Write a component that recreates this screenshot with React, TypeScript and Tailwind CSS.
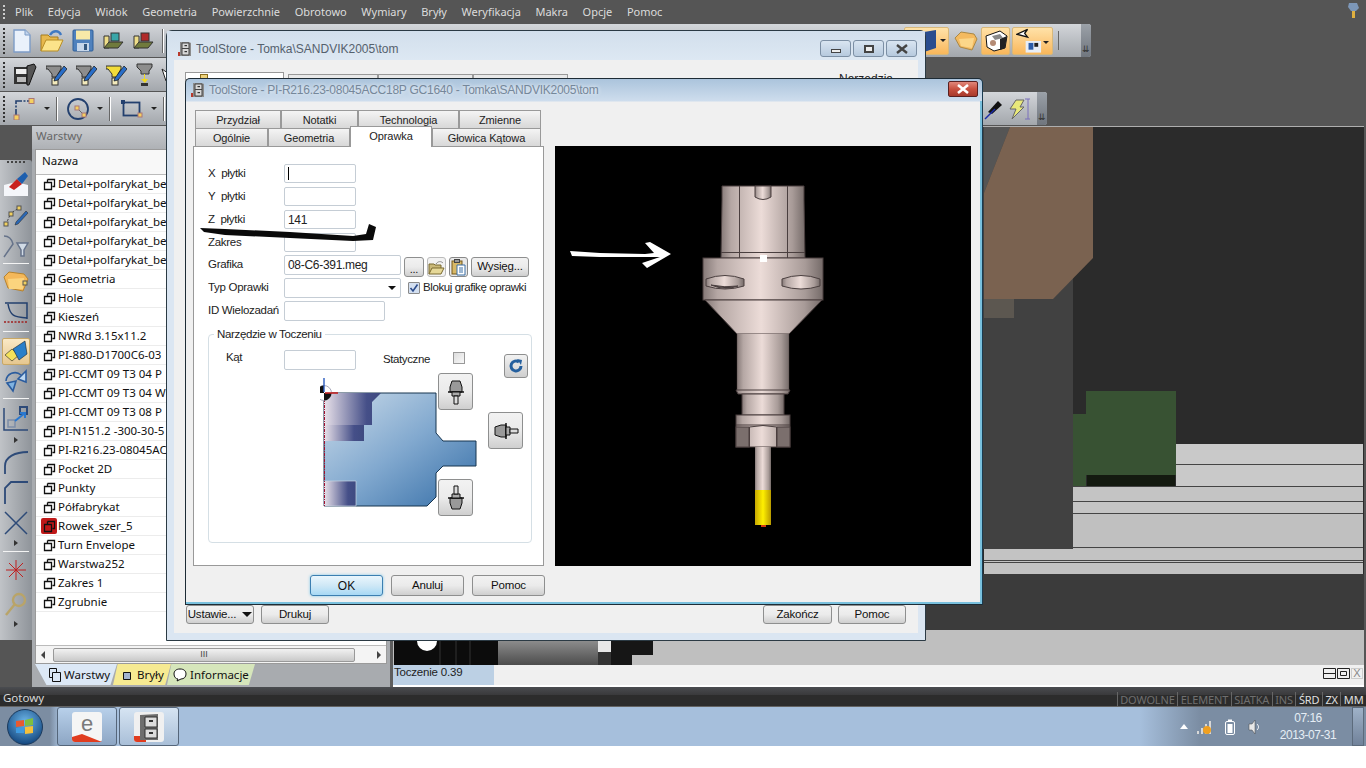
import React from "react";

const ui = "font-['Liberation_Sans',sans-serif]";
const menu = ["Plik","Edycja","Widok","Geometria","Powierzchnie","Obrotowo","Wymiary","Bryły","Weryfikacja","Makra","Opcje","Pomoc"];
const rows = ["Detal+polfarykat_bez","Detal+polfarykat_bez","Detal+polfarykat_bez","Detal+polfarykat_bez","Detal+polfarykat_bez","Geometria","Hole","Kieszeń","NWRd 3.15x11.2","PI-880-D1700C6-03","PI-CCMT 09 T3 04 P","PI-CCMT 09 T3 04 W","PI-CCMT 09 T3 08 P","PI-N151.2 -300-30-5","PI-R216.23-08045AC","Pocket 2D","Punkty","Półfabrykat","Rowek_szer_5","Turn Envelope","Warstwa252","Zakres 1","Zgrubnie"];

function Grip() {
  return <div className="flex flex-col gap-[2px] ml-[3px] mr-[6px] shrink-0">{[0,1,2,3,4,5,6].map(i=><span key={i} className="block w-[2px] h-[2px] bg-[#333]"/>)}</div>;
}
function Sep() { return <span className="block w-px h-[24px] bg-[#666] border-r border-white box-content shrink-0"/>; }
function Drop() { return <span className="block w-0 h-0 border-x-[3px] border-t-[3px] border-x-transparent border-t-[#222] shrink-0"/>; }
function Cabinet({s=16}:{s?:number}) {
  return <svg width={s} height={s} viewBox="0 0 16 16" className="shrink-0"><rect x="1" y="11" width="8" height="4" fill="#b8392c"/><path d="M3 1h9l2 1v13H3z" fill="#8c8c8c"/><path d="M5 2h7v12H5z" fill="#d8d8d8"/><path d="M5 7.5h7M5 2h7v12H5z" stroke="#444" fill="none"/><rect x="7.5" y="4" width="2.5" height="1.2" fill="#333"/><rect x="7.5" y="10" width="2.5" height="1.2" fill="#333"/></svg>;
}
function Layer() {
  return <svg width="13" height="13" viewBox="0 0 13 13" className="shrink-0"><path d="M4.5 1.5h7v7h-2M1.5 4.5h7v7h-7z" fill="none" stroke="#111" strokeWidth="1.3"/><path d="M4.5 1.5v3" stroke="#111" strokeWidth="1.3"/></svg>;
}
function Btn({children,className=""}:{children?:React.ReactNode;className?:string}) {
  return <div className={`flex items-center justify-center rounded-[3px] border border-[#8e8f8f] bg-linear-to-b from-[#f2f2f2] via-[#ebebeb] to-[#cfcfcf] text-[11.5px] text-[#111] shrink-0 ${className}`}>{children}</div>;
}
function Field({children,className=""}:{children?:React.ReactNode;className?:string}) {
  return <div className={`flex items-center px-[3px] rounded-[2px] border border-[#c5cdd5] bg-white text-[12px] text-[#222] shrink-0 ${className}`}>{children}</div>;
}
function Row({label,children}:{label:string;children:React.ReactNode}) {
  return <div className="flex items-center text-[11.5px] tracking-[-0.3px] text-[#222]"><span className="w-[76px] shrink-0 whitespace-pre">{label}</span>{children}</div>;
}
function Tab({w,children}:{w:string;children:React.ReactNode}) {
  return <div className={`flex items-center justify-center h-[18px] pt-[1px] border border-b-0 border-[#999] bg-linear-to-b from-[#f4f4f4] to-[#d8d8d8] text-[11px] tracking-[-0.1px] text-[#222] shrink-0 ${w}`}>{children}</div>;
}

function TopRowIcons() {
  return <>
    <svg width="20" height="24" viewBox="0 0 20 24" className="ml-[1px] shrink-0"><path d="M2 1h11l5 5v17H2z" fill="#eaf1fb" stroke="#7d9cc7" strokeWidth="1.4"/><path d="M13 1v5h5" fill="#c3d4ec" stroke="#7d9cc7"/></svg>
    <svg width="26" height="24" viewBox="0 0 26 24" className="ml-[7px] shrink-0"><path d="M2 22V6h7l2 2h8v4" fill="#e7b84d" stroke="#a57d1e"/><path d="M2 22l5-11h17l-5 11z" fill="#fbe38a" stroke="#b88d25"/><path d="M11 6c3-5 9-5 11 0" fill="none" stroke="#3f79c2" strokeWidth="2.4"/></svg>
    <svg width="22" height="23" viewBox="0 0 22 23" className="ml-[7px] shrink-0"><rect x="1" y="1" width="20" height="21" rx="1" fill="#4f81bd" stroke="#2f5f99"/><rect x="4" y="1.5" width="14" height="9" fill="#f7e9a8"/><rect x="5" y="14" width="12" height="8" fill="#c6d6ea"/><rect x="12" y="15" width="3" height="6" fill="#34587f"/></svg>
    <svg width="21" height="18" viewBox="0 0 21 18" className="ml-[9px] shrink-0"><path d="M1 4h5v12H1z" fill="#eedd88" stroke="#333"/><path d="M1 16l5-6h14l-5 6z" fill="#707a3c" stroke="#333"/><rect x="8" y="1" width="8" height="8" fill="#39a6a8" stroke="#333"/></svg>
    <svg width="21" height="18" viewBox="0 0 21 18" className="ml-[9px] shrink-0"><path d="M1 4h5v12H1z" fill="#eedd88" stroke="#333"/><path d="M1 16l5-6h14l-5 6z" fill="#707a3c" stroke="#333"/><rect x="8" y="1" width="8" height="8" fill="#b02a2a" stroke="#333"/></svg>
    <span className="ml-[8px]"><Sep/></span>
  </>;
}
function Holder({c="#8d8d8d",ml="ml-[9px]"}:{c?:string;ml?:string}) {
  return <svg width="21" height="22" viewBox="0 0 21 22" className={`${ml} shrink-0`}><path d="M0 2h15v3l-3 5v3H6v-3L2 5H0z" fill={c} stroke="#333"/><rect x="6" y="14" width="6" height="7" fill="#f3eabc" stroke="#333"/><path d="M9 14L18 2l3 3-9 11-4 1z" fill="#2a6ec8" stroke="#111" strokeWidth=".7"/></svg>;
}

function ToolRail() {
  const S=({w=26}:{w?:number})=><span className="block h-px bg-[#f4f4f4] mx-auto" style={{width:w}}/>;
  const Tri=()=><span className="block w-0 h-0 mx-auto border-y-[3px] border-l-[4px] border-y-transparent border-l-[#333]"/>;
  const I=({d,h=28,extra}:{d:React.ReactNode;h?:number;extra?:string})=><div className={`flex justify-center items-center shrink-0 ${extra||""}`} style={{height:h}}>{d}</div>;
  return <div className="w-[32px] h-[480px] mt-[34px] shrink-0 flex flex-col rounded-tr-[3px] bg-linear-to-r from-[#c0c3c7] to-[#8f949a] pt-[1px]">
    <div className="flex justify-center gap-[2px] h-[6px] mb-[3px]">{[0,1,2,3,4].map(i=><span key={i} className="block w-[2px] h-[2px] bg-[#444]"/>)}</div>
    <I d={<svg width="26" height="26" viewBox="0 0 26 26"><path d="M1 14l12-3 12 3v11H1z" fill="#f4f6fa"/><path d="M6 16l8-8 5 5-8 6z" fill="#c9211e"/><path d="M14 8l8-7 3 4-6 8z" fill="#1d5fae"/></svg>}/>
    <I extra="mt-[3px]" d={<svg width="26" height="25" viewBox="0 0 26 25"><path d="M3 21L8 10l8-5" stroke="#444" fill="none" strokeDasharray="2 1.5"/><rect x="1" y="19" width="4" height="4" fill="#f0d060" stroke="#555"/><rect x="6" y="9" width="4" height="4" fill="#f0d060" stroke="#555"/><rect x="14" y="3" width="4" height="4" fill="#f0d060" stroke="#555"/><path d="M13 19l10-11 2 2-10 11-3 1z" fill="#2a67b4" stroke="#222" strokeWidth=".5"/></svg>}/>
    <I extra="mt-[3px]" d={<svg width="26" height="26" viewBox="0 0 26 26" fill="none" stroke="#66738a" strokeWidth="1.5"><path d="M1 3c5 0 8 4 9 8L1 24"/><path d="M14 10h11l-4 7v6h-3v-6z" fill="#d1dbe6"/></svg>}/>
    <div className="mt-[3px]"><S/></div>
    <I extra="mt-[4px]" d={<svg width="26" height="22" viewBox="0 0 26 22"><path d="M1 6l5-5 15 2 4 5-5 12L5 17z" fill="#f4b85a" stroke="#b7832d"/><path d="M5 8l16-1-1 11H6z" fill="#fbd47e"/><rect x="20" y="10" width="4" height="4" fill="#f0d060" stroke="#555"/></svg>}/>
    <I extra="mt-[3px]" d={<svg width="26" height="24" viewBox="0 0 26 24" fill="none"><path d="M2 2h22v16M5 3c2 12 6 13 19 14" stroke="#23406e" strokeWidth="1.5"/><path d="M1 21h24" stroke="#a02020" strokeWidth="1.5" strokeDasharray="2 1.5"/></svg>}/>
    <div className="mt-[4px]"><S/></div>
    <div className="mt-[6px] mx-auto w-[28px] h-[27px] border border-[#c9a866] rounded-[2px] bg-linear-to-b from-[#fae9c6] to-[#e6c78f] flex items-center justify-center"><svg width="26" height="24" viewBox="0 0 26 24"><path d="M2 15l7-6 7 6-7 6z" fill="#f4e25a" stroke="#222" strokeWidth=".6"/><path d="M10 9l12-8 2 13-8 6z" fill="#2a7fc9" stroke="#123" strokeWidth=".6"/></svg></div>
    <I extra="mt-[2px]" d={<svg width="26" height="26" viewBox="0 0 26 26" fill="none" stroke="#2b5c9e" strokeWidth="1.6"><path d="M3 13a9 9 0 0 1 15-6" /><path d="M4 15l6 8 3-10z" fill="#7fb2e0"/><path d="M23 3l-8 8 8 3z" fill="#bcd6ef"/></svg>}/>
    <div className="mt-[3px]"><S/></div>
    <I extra="mt-[6px]" d={<svg width="26" height="26" viewBox="0 0 26 26" fill="none"><path d="M1 2v22h24" stroke="#2d4a78" strokeWidth="1.5"/><rect x="17" y="1" width="7" height="7" stroke="#2d4a78" strokeWidth="2"/><rect x="5" y="14" width="7" height="7" stroke="#7c8da8" strokeWidth="1.5"/><path d="M12 15l10-8m-5 0h5v5" stroke="#2a78cf" strokeWidth="2"/></svg>}/>
    <div className="mt-[3px] h-[8px] flex items-center"><Tri/></div>
    <I extra="mt-[4px]" d={<svg width="26" height="24" viewBox="0 0 26 24" fill="none" stroke="#2d4a78" strokeWidth="1.8"><path d="M2 24v-8c0-9 10-14 23-14"/></svg>}/>
    <I extra="mt-[2px]" d={<svg width="26" height="24" viewBox="0 0 26 24" fill="none" stroke="#2d4a78" strokeWidth="1.8"><path d="M2 24V8l6-6h17"/></svg>}/>
    <I extra="mt-[3px]" d={<svg width="26" height="26" viewBox="0 0 26 26" stroke="#2d4a78" strokeWidth="1.5"><path d="M2 2l22 22M24 2L2 24"/></svg>}/>
    <div className="mt-[3px] h-[6px] flex items-center"><Tri/></div>
    <div className="mt-[5px]"><S/></div>
    <I extra="mt-[4px]" d={<svg width="22" height="22" viewBox="0 0 22 22" stroke="#c02020"><path d="M11 1v20M1 11h20M4 4l14 14M18 4L4 18"/></svg>}/>
    <I extra="mt-[6px]" d={<svg width="24" height="26" viewBox="0 0 24 26" fill="none" stroke="#b9a468" strokeWidth="2.4"><circle cx="15" cy="9" r="6"/><path d="M11 13L2 24"/></svg>}/>
    <div className="mt-[3px] h-[6px] flex items-center"><Tri/></div>
  </div>;
}

function LeftPanel() {
  return <div className="w-[361px] shrink-0 bg-[#a8abaf] flex flex-col border-r-[3px] border-[#5e5e5e]">
    <div className="h-[23px] shrink-0 bg-linear-to-b from-[#c9ccd0] to-[#aeb1b5] flex items-center pl-[4px] pb-[3px] text-[11.5px] text-[#666] font-['Noto_Sans',sans-serif]">Warstwy</div>
    <div className="mx-[3px] flex-1 bg-white flex flex-col min-h-0 border border-[#9a9a9a]">
      <div className="h-[25px] shrink-0 flex items-center pl-[6px] pb-[2px] border-b border-[#bbb] text-[11.5px] text-[#111] font-['Noto_Sans',sans-serif] bg-[#f8f8f8]">Nazwa</div>
      <div className="flex-1 min-h-0">
        {rows.map((r,i)=><div key={i} className="h-[19px] flex items-center pl-[5px] border-b border-[#ececec] text-[11.5px] text-[#111] font-['Noto_Sans',sans-serif] whitespace-nowrap">
          <span className={`flex items-center justify-center w-[16px] h-[16px] rounded-[2px] mr-[1px] shrink-0 ${r==="Rowek_szer_5"?"bg-[#c01818]":""}`}><Layer/></span><span>{r}</span></div>)}
      </div>
      <div className="h-[18px] shrink-0 flex items-center bg-[#f4f4f4] border-t border-[#bbb] px-[5px] gap-[8px]">
        <span className="block w-0 h-0 border-y-[4px] border-r-[4px] border-y-transparent border-r-[#444]"/>
        <div className="flex-1 h-[14px] mr-[14px] rounded-[2px] border border-[#999] bg-linear-to-b from-[#f2f2f2] to-[#c9c9c9] flex items-center justify-center text-[9px] text-[#444] leading-none">III</div>
        <span className="block w-0 h-0 border-y-[4px] border-l-[4px] border-y-transparent border-l-[#444]"/>
      </div>
    </div>
    <div className="h-[23px] shrink-0 flex items-end pl-[3px] pb-[2px] text-[11.5px] text-[#111] font-['Noto_Sans',sans-serif]">
      <div className="w-[82px] h-[21px] flex items-center gap-[3px] pl-[14px] bg-[#dce8f6] [clip-path:polygon(0_0,100%_0,92%_100%,14%_100%)]"><svg width="12" height="14" viewBox="0 0 12 14" fill="none" stroke="#111"><path d="M.5.5h7v9h-7z"/><path d="M3.5 4.5h8v9h-8z" fill="#dce8f6"/></svg><span>Warstwy</span></div>
      <div className="w-[58px] h-[21px] -ml-[4px] flex items-center gap-[4px] pl-[10px] bg-[#f6ea92] [clip-path:polygon(8%_0,100%_0,90%_100%,0_100%)]"><svg width="10" height="10" viewBox="0 0 10 10"><path d="M.5 2.5h7v7h-7z" fill="#a3b4d0" stroke="#111"/></svg><span>Bryły</span></div>
      <div className="w-[88px] h-[21px] -ml-[4px] flex items-center gap-[3px] pl-[6px] bg-[#d6e6bb] [clip-path:polygon(5%_0,100%_0,93%_100%,0_100%)]"><svg width="14" height="14" viewBox="0 0 14 14"><path d="M7 1C3 1 1 3 1 6s2 5 4 5l-1 2 4-2c3 0 5-2 5-5s-2-5-6-5z" fill="#fff" stroke="#111"/></svg><span>Informacje</span></div>
    </div>
  </div>;
}

function Viewport() {
  return <div className="flex-1 min-w-0 flex flex-col pr-[2px] bg-[#555]">
    <svg width="971" height="539" viewBox="393 126 971 539" className="block shrink-0">
      <rect x="393" y="126" width="971" height="539" fill="#2b2b2b"/>
      <rect x="393" y="126" width="971" height="1" fill="#aeaeae"/>
      <rect x="393" y="127" width="680" height="422" fill="#414141"/>
      <path d="M984 127h26l-26 66z" fill="#555"/>
      <path d="M1010 127H1093V258L1053 299H984V193z" fill="#7a6250"/>
      <rect x="984" y="299" width="30" height="19" fill="#5c5750"/>
      <rect x="1073" y="414" width="13" height="72" fill="#385233"/>
      <rect x="1086" y="391" width="90" height="84" fill="#385233"/>
      <rect x="1087" y="475" width="88" height="11" fill="#141a10"/>
      <rect x="1176" y="444" width="187" height="42" fill="#c9c9c9"/>
      <rect x="1073" y="486" width="290" height="27" fill="#c4c4c4"/>
      <rect x="1073" y="513" width="290" height="36" fill="#c0c0c0"/>
      <rect x="984" y="549" width="379" height="25" fill="#c3c3c3"/>
      <path d="M1176 464.5h187M1073 486.5h290M1073 501.5h290M1073 513.5h290M1073 547.5h290M984 560.5h379M984 562.5h379" stroke="#444"/>
      <rect x="393" y="574" width="971" height="56" fill="#3b3b3b"/>
      <rect x="393" y="630" width="971" height="35" fill="#bfbfbf"/>
      <rect x="394" y="641" width="104" height="24" fill="#0c0c0c"/>
      <path d="M417 641a10 10 0 0 0 20 0z" fill="#fff"/>
      <path d="M440 641v24M456 641v24M470 641v24" stroke="#333"/>
      <defs><linearGradient id="vg" x1="0" x2="0" y1="0" y2="1"><stop offset="0" stopColor="#8c8c8c"/><stop offset="1" stopColor="#4c4c4c"/></linearGradient></defs>
      <rect x="498" y="641" width="100" height="24" fill="url(#vg)"/>
      <rect x="598" y="641" width="13" height="11" fill="#e8e8e8"/>
      <rect x="598" y="652" width="13" height="13" fill="#333"/>
      <rect x="611" y="641" width="42" height="14" fill="#161616"/>
      <rect x="611" y="655" width="21" height="10" fill="#161616"/>
    </svg>
    <div className="flex-1 bg-[#f0f0f0] flex items-stretch border-b-2 border-white">
      <div className="w-[101px] bg-[#bcd0e4] text-[11.5px] text-[#222] pl-[1px] leading-[15px] tracking-[-0.2px] font-['Liberation_Sans',sans-serif]">Toczenie 0.39</div>
      <div className="flex-1"/>
      <div className="flex items-start pt-[3px] gap-[1px] pr-[1px]">
        <svg width="13" height="11" viewBox="0 0 13 11" fill="none" stroke="#222"><path d="M.5.5h12v10H.5zM.5 5.5h12"/></svg>
        <svg width="13" height="11" viewBox="0 0 13 11" fill="none" stroke="#222"><path d="M.5.5h12v10H.5zM3.5 3.5h6v4h-6z"/></svg>
        <span className="w-[12px] h-[11px] flex items-center justify-center text-[11px] text-[#888] leading-none border border-[#ccc]">X</span>
      </div>
    </div>
  </div>;
}

function StatusBar() {
  const items:[string,string][]=[["DOWOLNE","text-[#6f6f6f]"],["ELEMENT","text-[#6f6f6f]"],["SIATKA","text-[#6f6f6f]"],["INS","text-[#6f6f6f]"],["ŚRD","text-[#e0e0e0]"],["ZX","text-[#e0e0e0]"],["MM","text-[#e0e0e0]"]];
  return <div className="h-[20px] shrink-0 flex items-center justify-between bg-[linear-gradient(180deg,#4a4c50_0%,#3a3a3c_38%,#2c2c2c_40%,#2c2c2c_95%,#9a9a9a_100%)] pl-[3px] text-[11.5px] text-[#d8d8d8] font-['Noto_Sans',sans-serif]">
    <span className="pt-[2px]">Gotowy</span>
    <div className="flex items-center h-full pt-[5px] text-[11px] leading-none">{items.map(([t,c])=><span key={t} className={`px-[2.5px] h-[15px] flex items-center border-l border-[#666] tracking-[-0.15px] ${c}`}>{t}</span>)}</div>
  </div>;
}

function Taskbar() {
  return <div className="h-[39px] shrink-0 flex items-stretch bg-[linear-gradient(90deg,#7c8da2_0px,#7c8da2_50px,#a6bfdc_60px,#a6bfdc_1140px,#7b8da3_1200px,#7b8da3_100%)] text-[12px] text-[#e6edf5] font-['Liberation_Sans',sans-serif]">
    <div className="w-[57px] flex items-center pl-[7px]">
      <svg width="36" height="36" viewBox="0 0 36 36"><defs><radialGradient id="orb" cx=".5" cy=".35" r=".7"><stop offset="0" stopColor="#6db6e8"/><stop offset="1" stopColor="#0d3f78"/></radialGradient></defs><circle cx="18" cy="18" r="17.5" fill="url(#orb)" stroke="#1c3a5c"/><path d="M9 12l8-1v6l-8 1z" fill="#e85a30"/><path d="M18 11l8-2v7l-8 1z" fill="#7fbf3f"/><path d="M9 19l8-1v6l-8 0z" fill="#3f9ae0"/><path d="M18 18l8-1v7l-8 1z" fill="#f6c03a"/></svg>
    </div>
    <div className="w-[60px] mr-[2px] rounded-[3px] border border-[#55667a] bg-linear-to-b from-[#b8d0ea] to-[#8da6c4] flex items-center justify-center">
      <svg width="32" height="32" viewBox="0 0 32 32"><rect x="1" y="1" width="30" height="30" rx="3" fill="#f5f5f5"/><path d="M1 26l10-3 20 8H4a3 3 0 0 1-3-3z" fill="#e03c1f"/><text x="16" y="20" textAnchor="middle" fontSize="22" fill="#7a7a7a" fontFamily="Liberation Sans, sans-serif">e</text></svg>
    </div>
    <div className="w-[60px] rounded-[3px] border border-[#55667a] bg-linear-to-b from-[#d6e4f2] to-[#a9bfd8] flex items-center justify-center">
      <svg width="32" height="32" viewBox="0 0 32 32"><rect x="1" y="1" width="30" height="30" rx="3" fill="#f0f0f0"/><path d="M1 25h12v6H4a3 3 0 0 1-3-3z" fill="#e03c1f"/><path d="M7 4l18-1v26H7z" fill="#6d6d6d"/><path d="M12 6h12v10H12zM12 18h12v9H12z" fill="#dcdcdc" stroke="#333"/><rect x="16" y="9" width="4" height="2" fill="#333"/><rect x="16" y="21" width="4" height="2" fill="#333"/></svg>
    </div>
    <div className="flex-1"/>
    <div className="flex items-center gap-[8px] mr-[12px]">
      <span className="block w-0 h-0 border-x-[4px] border-b-[5px] border-x-transparent border-b-white"/>
      <svg width="16" height="16" viewBox="0 0 16 16"><path d="M1 15v-3h2v3M5 15V9h2v6M9 15V5h2v10M13 15V2h2v13" fill="#d8d8d8"/><circle cx="11" cy="11" r="4" fill="#f0a020"/></svg>
      <svg width="10" height="16" viewBox="0 0 10 16" className="ml-[5px]"><rect x=".5" y="2.5" width="9" height="13" rx="1.5" fill="none" stroke="#fff"/><rect x="3" y=".5" width="4" height="2" fill="#fff"/><rect x="2.5" y="5" width="5" height="9" fill="#fff"/></svg>
      <svg width="13" height="16" viewBox="0 0 13 16" className="ml-[5px]"><path d="M1 5h3l3-4v14l-3-4H1z" fill="#e8e8e8" stroke="#444" strokeWidth=".5"/><path d="M9 5c2 2 2 4 0 6" stroke="#fff" fill="none"/></svg>
    </div>
    <div className="w-[70px] flex flex-col items-center justify-center gap-[3px] leading-[14px] tracking-[-0.5px]"><span>07:16</span><span>2013-07-31</span></div>
    <div className="w-[12px] ml-[9px] mr-[2px] border border-[#5c6b7c] bg-linear-to-b from-[#9fb2c8] to-[#71829a]"/>
  </div>;
}

function CaptionBtn({kind}:{kind:string}) {
  return <div className="w-[31px] h-[17px] rounded-[3px] border border-[#7c8fa4] bg-linear-to-b from-[#d9e5f1] to-[#b7cade] flex items-center justify-center">
    {kind==="min"&&<span className="block w-[10px] h-[4px] mt-[4px] bg-[#eee] border border-[#444]"/>}
    {kind==="max"&&<span className="block w-[10px] h-[8px] border-2 border-[#444] bg-[#eee]"/>}
    {kind==="x"&&<svg width="12" height="10" viewBox="0 0 12 10"><path d="M1 1l10 8M11 1L1 9" stroke="#444" strokeWidth="2.4"/></svg>}
  </div>;
}

function BackWindow() {
  return <div className={`absolute left-[166px] top-[30px] w-[760px] h-[611px] rounded-t-[6px] border border-[#2b3a44] bg-[#dbe6f2] flex flex-col ${ui}`}>
    <div className="h-[29px] shrink-0 flex items-center pl-[10px] pr-[8px] pt-[6px] bg-linear-to-b from-[#d2dfec] to-[#dde8f3]">
      <Cabinet/>
      <span className="ml-[3px] flex-1 text-[12px] text-[#55616d]">ToolStore - Tomka\SANDVIK2005\tom</span>
      <div className="flex gap-[2px]"><CaptionBtn kind="min"/><CaptionBtn kind="max"/><CaptionBtn kind="x"/></div>
    </div>
    <div className="flex-1 mx-[7px] mb-[7px] bg-[#f0f0f0] flex flex-col px-[12px] pb-[9px] pt-[12px]">
      <div className="flex items-start h-[10px] text-[12px] text-[#222]">
        <div className="w-[99px] h-[10px] -ml-[1px] bg-white border border-[#999] flex pl-[14px]"><span className="block w-[8px] h-[8px] mt-[1px] bg-[#eed27a] border border-[#8a6d1c]"/></div>
        <div className="w-[90px] h-[10px] ml-[4px] mt-[2px] border border-[#999] bg-[#e9e9e9]"/>
        <div className="w-[95px] h-[10px] mt-[2px] border border-[#999] bg-[#e9e9e9]"/>
        <div className="w-[95px] h-[10px] mt-[2px] border border-[#999] bg-[#e9e9e9]"/>
        <span className="ml-[271px] leading-[15px] whitespace-nowrap">Narzędzia</span>
      </div>
      <div className="flex-1"/>
      <div className="flex items-center">
        <Btn className="w-[68px] h-[19px] gap-[6px] tracking-[-0.2px]">Ustawie...<span className="block w-0 h-0 border-x-[5px] border-t-[5px] border-x-transparent border-t-[#111]"/></Btn>
        <Btn className="w-[68px] h-[19px] ml-[7px] tracking-[-0.2px]">Drukuj</Btn>
        <div className="flex-1"/>
        <Btn className="w-[69px] h-[19px] tracking-[-0.2px]">Zakończ</Btn>
        <Btn className="w-[68px] h-[19px] ml-[6px] tracking-[-0.2px]">Pomoc</Btn>
      </div>
    </div>
  </div>;
}

function Diagram() {
  return <svg width="160" height="136" viewBox="320 378 160 136" className="absolute left-[111px] top-[43px]">
    <defs>
      <linearGradient id="body" x1="0" y1="0" x2="1" y2="1"><stop offset="0" stopColor="#ccdcea"/><stop offset=".5" stopColor="#82a9cf"/><stop offset="1" stopColor="#346da6"/></linearGradient>
      <linearGradient id="ins" x1="0" x2="1" y1="0" y2="0"><stop offset="0" stopColor="#eae2ea"/><stop offset=".75" stopColor="#454f88"/><stop offset="1" stopColor="#3e4a80"/></linearGradient>
    </defs>
    <path d="M324 393H436V433L443 441H476V466H443L436 473V497L427 506H324z" fill="url(#body)" stroke="#16344f"/>
    <path d="M324 393H381L372 402V425H324z" fill="url(#ins)"/>
    <path d="M324 425H364V441H324z" fill="url(#ins)"/>
    <path d="M324 481H356V506H324z" fill="url(#ins)" stroke="#c9d6e2" strokeWidth=".7"/>
    <path d="M324.5 393V506" stroke="#a01030" strokeDasharray="3 1 1 1"/>
    <circle cx="324" cy="393" r="7.5" fill="#fff" stroke="#aab"/>
    <path d="M324 393V385.5A7.5 7.5 0 0 0 316.5 393zM324 393V400.5A7.5 7.5 0 0 0 331.5 393z" fill="#111"/>
    <path d="M324 378V392" stroke="#2a5cc0" strokeWidth="1.4"/><path d="M325 393H338" stroke="#c02020" strokeWidth="1.6"/>
  </svg>;
}
function ToolMini({dir}:{dir:string}) {
  const g=<g><path d="M-4 -11h8l2 6v5h-12v-5z" fill="#999" stroke="#111"/><path d="M-8 0h16" stroke="#111" strokeWidth="1.5"/><path d="M-4 0h8v4h-8z" fill="#aaa" stroke="#111"/><path d="M-2 4h4v8h-4z" fill="#ddd" stroke="#111"/></g>;
  const r=dir==="up"?0:dir==="down"?180:-90;
  return <svg width="26" height="26" viewBox="-13 -13 26 26"><g transform={`rotate(${r})`}>{g}</g></svg>;
}

function FrontWindow() {
  return <div className={`absolute left-[185px] top-[78px] w-[798px] h-[527px] rounded-t-[5px] border border-[#1d2b35] border-r-[#1b3b50] bg-[linear-gradient(180deg,#abc4dc_0px,#cedded_22px,#f0f0f0_23px)] flex flex-col ${ui}`}>
    <div className="h-[22px] shrink-0 flex items-center pl-[4px] pr-[4px]">
      <Cabinet/>
      <span className="ml-[3px] flex-1 text-[12px] tracking-[-0.25px] text-[#75879a] [text-shadow:0_0_4px_#fff]">ToolStore - PI-R216.23-08045ACC18P GC1640 - Tomka\SANDVIK2005\tom</span>
      <div className="w-[30px] h-[16px] mt-[-2px] rounded-[2px] border border-[#5a2020] bg-linear-to-b from-[#e0867a] via-[#c8503f] to-[#a83a2c] flex items-center justify-center"><svg width="12" height="10" viewBox="0 0 12 10"><path d="M1 1l10 8M11 1L1 9" stroke="#fff" strokeWidth="2.6"/></svg></div>
    </div>
    <div className="flex-1 flex border-r-2 border-b-2 border-[#79c0dd] pl-[7px] pt-[9px] min-h-0">
      <div className="w-[351px] shrink-0 flex flex-col">
        <div className="flex pl-[2px]">
          <Tab w="w-[86px]">Przydział</Tab><Tab w="w-[77px]">Notatki</Tab><Tab w="w-[101px]">Technologia</Tab><Tab w="w-[82px]">Zmienne</Tab>
        </div>
        <div className="flex pl-[2px] relative z-10">
          <Tab w="w-[73px]">Ogólnie</Tab><Tab w="w-[82px]">Geometria</Tab>
          <div className="w-[82px] h-[21px] -mt-[2px] border border-b-0 border-[#999] bg-white flex items-start pt-[1px] justify-center text-[11px] tracking-[-0.1px] text-[#222] relative -mb-[1px]">Oprawka</div>
          <Tab w="w-[109px]">Głowica Kątowa</Tab>
        </div>
        <div className="w-[351px] h-[420px] shrink-0 bg-white border border-[#999] pl-[14px] pt-[17px] flex flex-col">
          <div className="flex flex-col gap-[4px]">
            <Row label="X  płytki"><Field className="w-[72px] h-[19px] border-[#8fb7d0]"><span className="block w-px h-[13px] bg-black"/></Field></Row>
            <Row label="Y  płytki"><Field className="w-[72px] h-[19px]"/></Row>
            <Row label="Z  płytki"><Field className="w-[72px] h-[19px]">141</Field></Row>
            <Row label="Zakres"><Field className="w-[72px] h-[19px]"/></Row>
          </div>
          <div className="flex flex-col gap-[3px] mt-[3px]">
            <Row label="Grafika">
              <Field className="w-[117px] h-[20px]">08-C6-391.meg</Field>
              <Btn className="w-[20px] h-[20px] ml-[3px] mt-[2px] -mb-[2px] items-end text-[11px] leading-[14px]">...</Btn>
              <div className="w-[19px] h-[20px] ml-[3px] mt-[2px] -mb-[2px] border border-[#bbb] rounded-[3px] bg-[#f2f2f2] flex items-center justify-center shrink-0"><svg width="17" height="15" viewBox="0 0 17 15"><path d="M1 14V4h5l1 1h6v3" fill="#c9b878" stroke="#7b6b30"/><path d="M1 14l3-6h12l-3 6z" fill="#e6d898" stroke="#7b6b30"/><path d="M8 4c2-3 5-3 7-1" stroke="#888" fill="none"/></svg></div>
              <div className="w-[19px] h-[20px] ml-[3px] mt-[2px] -mb-[2px] border border-[#888] rounded-[3px] bg-[#e8e8e8] flex items-center justify-center shrink-0"><svg width="15" height="17" viewBox="0 0 15 17"><rect x="1" y="2" width="10" height="13" fill="#d8b866" stroke="#75591c"/><rect x="3.5" y="0.5" width="5" height="3" fill="#999" stroke="#444"/><path d="M6 6h8v10H6z" fill="#fff" stroke="#3a6ea5"/><path d="M8 9h4M8 11h4M8 13h4" stroke="#3a6ea5"/></svg></div>
              <Btn className="w-[58px] h-[20px] ml-[3px] mt-[2px] -mb-[2px] tracking-[-0.2px]">Wysięg...</Btn>
            </Row>
            <Row label="Typ Oprawki">
              <Field className="w-[117px] h-[20px] justify-end pr-[4px]"><span className="block w-0 h-0 border-x-[4px] border-t-[4px] border-x-transparent border-t-[#111]"/></Field>
              <span className="w-[12px] h-[12px] ml-[7px] border border-[#8a8a8a] rounded-[1px] bg-[#d3dff0] flex items-center justify-center shrink-0"><svg width="10" height="10" viewBox="0 0 10 10"><path d="M1.5 5l2.5 3 4.5-6.5" stroke="#2a4a8a" strokeWidth="1.6" fill="none"/></svg></span>
              <span className="ml-[3px] tracking-[-0.4px] whitespace-nowrap">Blokuj grafikę oprawki</span>
            </Row>
            <Row label="ID Wielozadań"><Field className="w-[101px] h-[20px]"/></Row>
          </div>
          <div className="relative w-[324px] h-[209px] mt-[13px] shrink-0 rounded-[4px] border border-[#d5dfe5]">
            <span className="absolute left-[5px] -top-[8px] bg-white px-[3px] text-[11.5px] tracking-[-0.35px] text-[#222] leading-[15px]">Narzędzie w Toczeniu</span>
            <div className="flex items-center h-[20px] mt-[15px] pl-[17px] text-[11.5px] tracking-[-0.4px] text-[#222]">
              <span className="w-[58px] shrink-0 -mt-[5px]">Kąt</span>
              <Field className="w-[72px] h-[20px]"/>
              <span className="ml-[27px] w-[70px] -mt-[1px]">Statyczne</span>
              <span className="w-[12px] h-[12px] -mt-[5px] border border-[#999] bg-linear-to-br from-[#ddd] to-[#f8f8f8] shrink-0"/>
              <div className="w-[24px] h-[24px] ml-[39px] mt-[12px] rounded-[3px] border border-[#8e8f8f] bg-linear-to-b from-[#f2f2f2] to-[#cfcfcf] flex items-center justify-center shrink-0"><svg width="16" height="16" viewBox="0 0 16 16" fill="none"><path d="M13 8a5 5 0 1 1-2-4" stroke="#245f9e" strokeWidth="3"/><path d="M9 1l5 1-1 5z" fill="#245f9e"/></svg></div>
            </div>
            <Diagram/>
            <Btn className="absolute left-[229px] top-[38px] w-[35px] h-[37px]"><ToolMini dir="up"/></Btn>
            <Btn className="absolute left-[279px] top-[77px] w-[35px] h-[37px]"><ToolMini dir="right"/></Btn>
            <Btn className="absolute left-[229px] top-[144px] w-[35px] h-[37px]"><ToolMini dir="down"/></Btn>
          </div>
        </div>
        <div className="flex justify-end gap-[8px] mt-[9px] -mr-[1px]">
          <div className="w-[73px] h-[21px] rounded-[3px] border border-[#3c7fb1] shadow-[0_0_3px_#7cc7e8] bg-linear-to-b from-[#eaf6fd] via-[#cfe8f6] to-[#a7d9f5] flex items-center justify-center text-[12px] text-[#111]">OK</div>
          <Btn className="w-[73px] h-[21px] tracking-[-0.2px]">Anuluj</Btn>
          <Btn className="w-[73px] h-[21px] tracking-[-0.2px]">Pomoc</Btn>
        </div>
      </div>
      <svg width="416" height="420" viewBox="555 146 416 420" className="ml-[11px] mt-[36px] block shrink-0 bg-black">
        <defs>
          <linearGradient id="m" x1="0" x2="1" y1="0" y2="0"><stop offset="0" stopColor="#857977"/><stop offset=".12" stopColor="#b5a7a4"/><stop offset=".48" stopColor="#ecdcd8"/><stop offset=".85" stopColor="#a89b98"/><stop offset="1" stopColor="#756b69"/></linearGradient>
          <linearGradient id="y" x1="0" x2="1" y1="0" y2="0"><stop offset="0" stopColor="#c8a800"/><stop offset=".5" stopColor="#fff000"/><stop offset="1" stopColor="#b89a00"/></linearGradient>
        </defs>
        <g stroke="#4a3f3f" strokeWidth="1" fill="url(#m)">
          <path d="M722 186H804V200L805 258H721L722 200z"/>
          <path d="M739.5 186V258M787.5 186V258M721 252.5H805" fill="none"/>
          <path d="M755 186H771V197Q763 202 755 197z"/>
          <rect x="703" y="258" width="120" height="42"/>
          <path d="M705 300H822L789 334H737z"/>
          <rect x="737" y="334" width="52" height="56" stroke="none"/>
          <path d="M737 334V390M789 334V390" fill="none" strokeOpacity=".4"/>
          <path d="M736 390H790L788 394H738z"/>
          <rect x="742" y="394" width="42" height="21"/>
          <rect x="736" y="415" width="54" height="32"/>
          <path d="M736 425H790M749.5 427V447M776.5 427V447M749.5 427Q763 424 776.5 427" fill="none"/>
          <rect x="736" y="427" width="13" height="20" fill="#7b6f6d"/>
          <rect x="777" y="427" width="13" height="20" fill="#7b6f6d"/>
          <rect x="755" y="447" width="16" height="43" stroke="none"/>
          <path d="M706 279Q725 272 744 279V286Q725 292 706 286z"/>
          <path d="M782 279Q801 272 820 279V286Q801 292 782 286z"/>
          <path d="M711 285Q725 291 738 286Q725 288 711 285z" fill="#443a3a"/>
        </g>
        <rect x="755" y="490" width="16" height="35" fill="url(#y)"/>
        <rect x="761" y="525" width="5" height="2" fill="#d83a10"/>
        <rect x="760" y="255" width="7" height="7" fill="#fff"/>
        <path d="M570 251L600 253L645 254L654 253L645 243L650 242L671 254L647 268L642 263L660 257L600 257L572 256z" fill="#fff"/>
      </svg>
    </div>
  </div>;
}

const orange = "rounded-[2px] border border-[#d8b87a] bg-linear-to-b from-[#ffe2a8] to-[#f9b75a]";

export default function App() {
  return <div className={`relative w-[1366px] h-[768px] overflow-hidden bg-white flex flex-col ${ui}`}>
    <div className="h-[687px] shrink-0 bg-[#555] flex flex-col">
      <div className="h-[24px] shrink-0 flex items-center pl-[3px] text-[11px] text-[#dcdcdc] font-['Noto_Sans',sans-serif]">
        <div className="flex flex-col gap-[2px] mr-[10px]">{[0,1,2,3].map(i=><span key={i} className="block w-[2px] h-[2px] bg-[#ccc]"/>)}</div>
        <div className="flex gap-[14.6px]">{menu.map(m=><span key={m}>{m}</span>)}</div>
      </div>
      <div className="flex flex-col gap-[1px] shrink-0">
        <div className="w-[1091px] h-[33px] flex items-center rounded-r-[3px] bg-linear-to-b from-[#d3d6da] to-[#a3a7ac]">
          <Grip/><TopRowIcons/>
          <div className="flex-1"/>
          <div className={`w-[45px] h-[28px] flex items-center justify-end gap-[3px] pr-[2px] shrink-0 ${orange}`}><svg width="13" height="22" viewBox="0 0 13 22"><path d="M0 2l12-2v18L0 22z" fill="#2b4d8e"/></svg><Drop/></div>
          <svg width="24" height="20" viewBox="0 0 24 20" className="ml-[5px] mr-[3px] shrink-0"><path d="M1 7l6-6 13 2 3 5-5 11-12-3z" fill="#f4ba60" stroke="#aa8845"/><path d="M5 8l15-1-2 10-11-2z" fill="#fbd689"/></svg>
          <div className={`w-[29px] h-[28px] flex items-center justify-center shrink-0 ${orange}`}><svg width="24" height="22" viewBox="0 0 24 22"><path d="M2 6l14-5 7 5-2 12-11 3-7-4z" fill="#fff" stroke="#111"/><path d="M8 6l8-2 3 4-8 2z" fill="#888"/><circle cx="9" cy="13" r="3" fill="#b58b75"/><path d="M16 9l7-3-2 12-5 2z" fill="#222"/></svg></div>
          <div className={`w-[41px] h-[28px] ml-[2px] flex items-start justify-between pl-[3px] pr-[3px] shrink-0 ${orange}`}><svg width="28" height="26" viewBox="0 0 28 26"><path d="M12 1L1 6l11 3-3-4z" fill="#fff" stroke="#111" strokeWidth="1.4"/><rect x="10" y="13" width="16" height="12" fill="#e8eef6"/><rect x="13" y="15" width="5" height="7" fill="#2b5ca8"/><rect x="19" y="15" width="4" height="4" fill="#222"/></svg><span className="mt-[13px]"><Drop/></span></div>
          <span className="block w-px h-[19px] bg-[#666] ml-[5px] shrink-0"/>
          <div className="w-[10px] h-full ml-[22px] rounded-r-[3px] bg-linear-to-b from-[#9ba1a8] to-[#70767e] flex items-end justify-center pb-[3px] shrink-0"><span className="text-[9px] leading-none text-[#333]">⇊</span></div>
        </div>
        <div className="w-[800px] h-[33px] flex items-center bg-linear-to-b from-[#d3d6da] to-[#a3a7ac]">
          <Grip/>
          <svg width="24" height="24" viewBox="0 0 24 24" className="shrink-0 ml-[2px]"><rect x="1" y="4" width="16" height="17" fill="#333"/><rect x="3" y="6" width="12" height="5" fill="#eee"/><rect x="4" y="14" width="9" height="5" fill="#bbb"/><path d="M14 3l7-2 2 3-7 18h-2z" fill="#555" stroke="#111"/></svg>
          <Holder/><Holder/><Holder c="#f2dc3a"/>
          <svg width="17" height="24" viewBox="0 0 17 24" className="ml-[9px] shrink-0"><path d="M1 1h15v3l-3 4v3H5V8L1 4z" fill="#8d8d8d" stroke="#333"/><path d="M8 11v5h-3l4 4 3-4H9v-5z" fill="#f0d820"/><rect x="5" y="20" width="7" height="3" fill="#333"/></svg>
          <svg width="12" height="14" viewBox="0 0 12 14" className="ml-[8px] shrink-0"><path d="M1 1l10 7-6 5z" fill="#fff" stroke="#222"/></svg>
        </div>
        <div className="w-[1047px] h-[33px] flex items-center rounded-r-[3px] bg-linear-to-b from-[#d3d6da] to-[#a3a7ac]">
          <Grip/>
          <svg width="24" height="22" viewBox="0 0 24 22" className="ml-[2px] shrink-0" fill="none"><path d="M3 20V3h16" stroke="#23406e" strokeWidth="1.6" strokeDasharray="9 1.5 2 1.5"/><rect x="16" y="0.5" width="5" height="5" fill="#f5d060" stroke="#a77"/><rect x="1" y="17" width="5" height="5" fill="#f5d060" stroke="#a77"/></svg>
          <span className="ml-[7px]"><Drop/></span><span className="ml-[6px]"><Sep/></span>
          <svg width="24" height="24" viewBox="0 0 24 24" className="ml-[8px] shrink-0" fill="none"><circle cx="12" cy="12" r="10" stroke="#23406e" strokeWidth="1.8"/><path d="M11 11l7 7" stroke="#666"/><rect x="9" y="9" width="4" height="4" fill="#f5d060" stroke="#a77"/><rect x="16" y="16" width="4" height="4" fill="#f5d060" stroke="#a77"/></svg>
          <span className="ml-[7px]"><Drop/></span><span className="ml-[6px]"><Sep/></span>
          <svg width="22" height="18" viewBox="0 0 22 18" className="ml-[10px] shrink-0" fill="none"><rect x="2.5" y="2.5" width="16" height="13" stroke="#23406e" strokeWidth="1.8"/><rect x="0" y="0" width="4" height="4" fill="#23406e"/><rect x="17" y="13" width="4" height="4" fill="#f5d060" stroke="#a77"/></svg>
          <span className="ml-[8px]"><Drop/></span><span className="ml-[6px]"><Sep/></span>
          <div className="flex-1"/>
          <svg width="20" height="22" viewBox="0 0 20 22" className="shrink-0 mr-[4px]"><path d="M4 14L14 3l4 4-10 9z" fill="#111"/><path d="M1 21l10-10" stroke="#1a2aa8" strokeWidth="1.4"/></svg>
          <svg width="22" height="22" viewBox="0 0 22 22" className="shrink-0 mr-[7px]"><path d="M8 2h8l-4 7h4L4 21l4-10H2z" fill="#e9e97a" stroke="#666"/><path d="M20 1v20M17 1h6M17 21h6" stroke="#7a70bc"/></svg>
          <div className="w-[10px] h-full rounded-r-[3px] bg-linear-to-b from-[#9ba1a8] to-[#70767e] flex items-end justify-center pb-[3px] shrink-0"><span className="text-[9px] leading-none text-[#333]">⇊</span></div>
        </div>
      </div>
      <div className="flex-1 min-h-0 flex mt-[1px]">
        <ToolRail/>
        <LeftPanel/>
        <Viewport/>
      </div>
    </div>
    <StatusBar/>
    <Taskbar/>
    <div className="flex-1 bg-white"/>
    <BackWindow/>
    <FrontWindow/>
    <svg width="180" height="30" viewBox="198 218 180 30" className="absolute left-[198px] top-[218px]"><path d="M200 228L225 229L290 232L353 236L366 234L369 224L376 227L373 240L353 241L290 238L225 235L204 232z" fill="#0a0a0a"/></svg>
    <svg width="14" height="16" viewBox="0 0 14 16" className="absolute left-[1347px] top-[2px]"><path d="M2 1h8l2 5-3 3H4L1 5z" fill="#7d97b8"/><rect x="5" y="9" width="3" height="7" fill="#e0b040"/></svg>
  </div>;
}
